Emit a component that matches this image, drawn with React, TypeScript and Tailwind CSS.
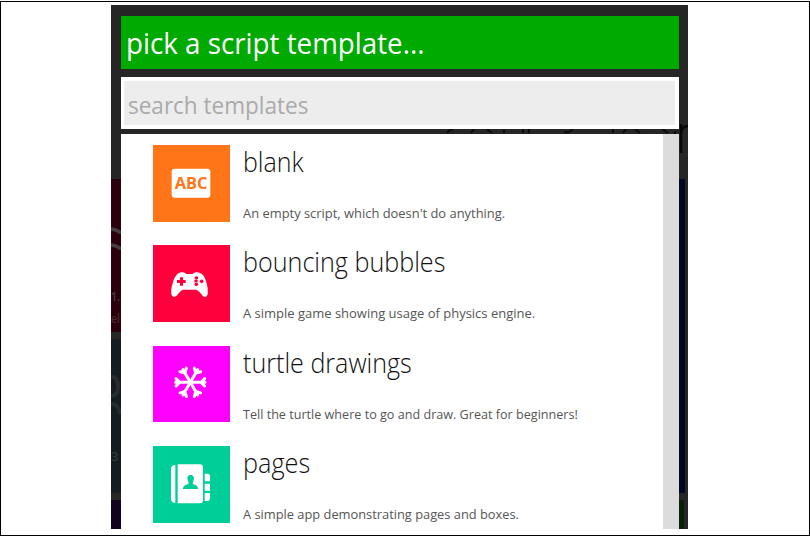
import type { ReactNode } from "react";

const AbcIcon = () => (
  <svg viewBox="24 15 231 231" className="block h-full w-full">
    <rect x="80" y="86" width="116" height="87" rx="9" fill="#fff" />
    <text
      x="138"
      y="148"
      textAnchor="middle"
      textLength="98"
      lengthAdjust="spacingAndGlyphs"
      fontSize="50"
      fontWeight="700"
      fill="#ff7518"
      fontFamily="'Open Sans', sans-serif"
    >
      ABC
    </text>
  </svg>
);

const GamepadIcon = () => (
  <svg viewBox="24 15 231 231" className="block h-full w-full">
    <path
      d="M104 98C112 95 120 97 124 102H143C148 96 157 95 165 99C173 102 178 109 182 120C187 136 190 150 188 162C186 172 178 173 173 167C167 160 162 151 153 149H114C106 152 101 160 95 167C89 173 81 171 79 162C77 149 81 135 86 120C90 109 96 101 104 98Z"
      fill="#fff"
    />
    <path d="M105 112h9v8h8v9h-8v8h-9v-8h-9v-9h9z" fill="#ff003c" />
    <g fill="#ff003c">
      <circle cx="154" cy="114" r="5.5" />
      <circle cx="154" cy="133" r="5.5" />
      <circle cx="170" cy="124" r="5.5" />
      <path d="M148 120h10v7h-10z" />
    </g>
  </svg>
);

const SnowflakeIcon = () => (
  <svg viewBox="24 17 231 228" className="block h-full w-full">
    <g fill="none" stroke="#fff" strokeWidth="9" strokeLinecap="round" strokeLinejoin="round">
      {[0, 60, 120, 180, 240, 300].map((angle) => (
        <g key={angle} transform={`rotate(${angle} 136 126)`}>
          <path d="M136 126H180M179 115L168 126L179 137" />
        </g>
      ))}
    </g>
  </svg>
);

const ContactsIcon = () => (
  <svg viewBox="24 18 231 231" className="block h-full w-full">
    <path d="M91 74V189C82 188 78 184 78 176V87C78 79 82 75 91 74Z" fill="#fff" />
    <path d="M98 73H164Q174 73 174 83V180Q174 190 164 190H98Z" fill="#fff" />
    <path
      d="M137 105C146 105 148 112 146 120C145 125 143 126 143 131C151 135 159 136 159 147H114C114 136 122 135 131 131C131 126 129 125 128 120C126 112 128 105 137 105Z"
      fill="#00ce98"
    />
    <path
      d="M179 101H188Q195 101 195 109V124H179ZM179 131H195V152H179ZM179 159H195V174Q195 183 188 183H179Z"
      fill="#fff"
    />
  </svg>
);

type Template = {
  title: string;
  text: string;
  icon: ReactNode;
  tile: string;
  titleClass: string;
  textClass: string;
};

const templates: Template[] = [
  {
    title: "blank",
    text: "An empty script, which doesn't do anything.",
    icon: <AbcIcon />,
    tile: "h-[77px] bg-[#ff7518]",
    titleClass: "scale-x-[0.925]",
    textClass: "scale-x-[1.076]",
  },
  {
    title: "bouncing bubbles",
    text: "A simple game showing usage of physics engine.",
    icon: <GamepadIcon />,
    tile: "h-[77px] bg-[#ff003c]",
    titleClass: "scale-x-[0.931]",
    textClass: "scale-x-[1.082]",
  },
  {
    title: "turtle drawings",
    text: "Tell the turtle where to go and draw. Great for beginners!",
    icon: <SnowflakeIcon />,
    tile: "h-[76px] bg-[#ff00ff]",
    titleClass: "scale-x-[0.93]",
    textClass: "scale-x-[1.05]",
  },
  {
    title: "pages",
    text: "A simple app demonstrating pages and boxes.",
    icon: <ContactsIcon />,
    tile: "h-[77px] bg-[#00ce98]",
    titleClass: "scale-x-[0.935]",
    textClass: "scale-x-[1.07]",
  },
];

function TemplateRow({ item }: { item: Template }) {
  return (
    <div className="flex h-[100.15px] shrink-0">
      <div className={`w-[77px] shrink-0 ${item.tile}`}>{item.icon}</div>
      <div className="ml-[13px] flex flex-col pt-[1px] whitespace-nowrap">
        <div className="h-[58px] text-[27px] leading-[32px] font-light text-[#111]">
          <span className={`inline-block origin-left ${item.titleClass}`}>{item.title}</span>
        </div>
        <div className="text-[12px] leading-[20px] text-[#555]">
          <span className={`inline-block origin-left ${item.textClass}`}>{item.text}</span>
        </div>
      </div>
    </div>
  );
}

export default function App() {
  return (
    <div className="flex h-[537px] w-[810px] flex-col overflow-hidden bg-white pt-px font-['Open_Sans','Noto_Sans',sans-serif]">
      <div className="flex h-[535px] justify-center border border-black pt-[3px] pr-[11px]">
        <div className="flex h-[524px] w-[577px] overflow-hidden bg-[#262626]">
          <div className="flex w-[10px] shrink-0 flex-col overflow-hidden pt-[174px]">
            <div className="h-[153px] shrink-0 bg-[#2a000c]">
              <svg viewBox="0 0 10 153" className="block h-full w-full">
                <path d="M0 50Q5 50 10 54M0 66Q5 66 10 70" stroke="#444042" strokeWidth="3.5" fill="none" />
                <text x="0" y="122" textLength="9" lengthAdjust="spacingAndGlyphs" fontSize="13" fontWeight="600" fill="#4c3a3e">1.</text>
                <text x="0" y="144" textLength="9" lengthAdjust="spacingAndGlyphs" fontSize="13" fontWeight="600" fill="#4c2a30">el</text>
              </svg>
            </div>
            <div className="mt-[7px] h-[154px] shrink-0 bg-[#151c22]">
              <svg viewBox="0 0 10 154" className="block h-full w-full">
                <path d="M0 38Q7 37 7 48Q7 57 0 57M0 65Q7 64 9 75" stroke="#292c2e" strokeWidth="4" fill="none" />
                <text x="0" y="122" fontSize="13" fontWeight="600" fill="#34383b">3</text>
              </svg>
            </div>
            <div className="mt-[7px] h-[29px] shrink-0 bg-[#12021f]" />
          </div>

          <div className="flex w-[558px] shrink-0 flex-col pt-[11px]">
            <div className="flex h-[53px] shrink-0 items-center bg-[#00aa00] pl-[5px] text-[29px] whitespace-nowrap text-white">
              <span className="inline-block origin-left scale-x-[0.957]">pick a script template...</span>
            </div>
            <div className="mt-[8px] h-[52px] shrink-0 bg-white p-[4px] pl-[3px]">
              <div className="flex h-[44px] items-center bg-[#ededed] pt-[3px] pl-[4px] text-[24px] whitespace-nowrap text-[#aaa]">
                <span className="inline-block origin-left scale-x-[0.938]">search templates</span>
              </div>
            </div>
            <div className="h-[5px] shrink-0 overflow-hidden">
              <svg viewBox="0 0 558 5" className="block h-full w-full">
                <path
                  d="M326 4Q329 0 332 0M350 4L353 0M366 0L371 4M383 1V4M402 0V4M408 0V4M443 3Q449 4 452 0M492 0V4M502 4L505 0M514 0L519 4M541 0L547 4M554 2V5"
                  fill="none"
                  stroke="#0b0b0b"
                  strokeWidth="2"
                />
              </svg>
            </div>
            <div className="flex h-[395px] shrink-0 overflow-hidden bg-white">
              <div className="flex w-[542px] flex-col overflow-hidden pt-[11.3px] pl-[32px]">
                {templates.map((item) => (
                  <TemplateRow key={item.title} item={item} />
                ))}
              </div>
              <div className="w-[16px] bg-[#dcdcdc]" />
            </div>
          </div>

          <div className="flex w-[9px] shrink-0 flex-col">
            <div className="h-[174px] shrink-0">
              <svg viewBox="0 0 9 174" className="block h-full w-full">
                <path d="M2 119V148M2 128Q3 121 9 121" fill="none" stroke="#060606" strokeWidth="2.5" />
              </svg>
            </div>
            <div className="h-[314px] w-[6px] shrink-0 bg-[#020824]" />
            <div className="mt-[7px] h-[29px] w-[5px] shrink-0 bg-[#082006]" />
          </div>
        </div>
      </div>
    </div>
  );
}
